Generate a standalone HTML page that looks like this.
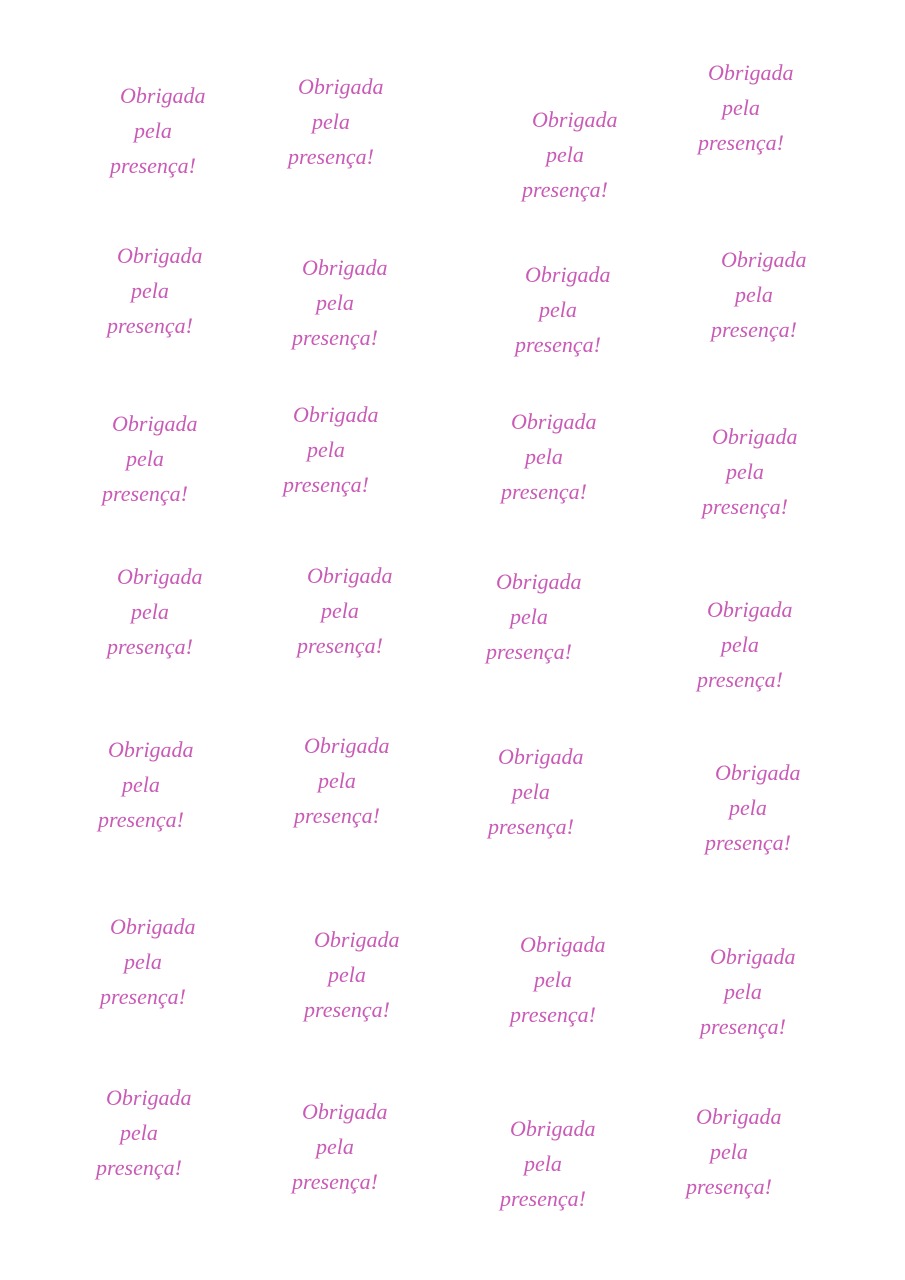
<!DOCTYPE html>
<html><head><meta charset="utf-8"><style>
html,body{margin:0;padding:0;background:#fff;width:905px;height:1280px;overflow:hidden}
.b{position:absolute;font-family:"Liberation Serif",serif;font-style:italic;font-size:22px;line-height:35px;color:#c95bb6;white-space:nowrap}
.b span{display:block}
.b .o{margin-left:10px}
.b .p{margin-left:24px}
</style></head><body>
<script>
const d=[[110,96],[288,87],[522,120],[698,73],
[107,256],[292,268],[515,275],[711,260],
[102,424],[283,415],[501,422],[702,437],
[107,577],[297,576],[486,582],[697,610],
[98,750],[294,746],[488,757],[705,773],
[100,927],[304,940],[510,945],[700,957],
[96,1098],[292,1112],[500,1129],[686,1117]];
for(const [x,y] of d){document.write('<div class="b" style="left:'+x+'px;top:'+(y-18)+'px"><span class="o">Obrigada</span><span class="p">pela</span><span>presença!</span></div>');}
</script>
</body></html>
